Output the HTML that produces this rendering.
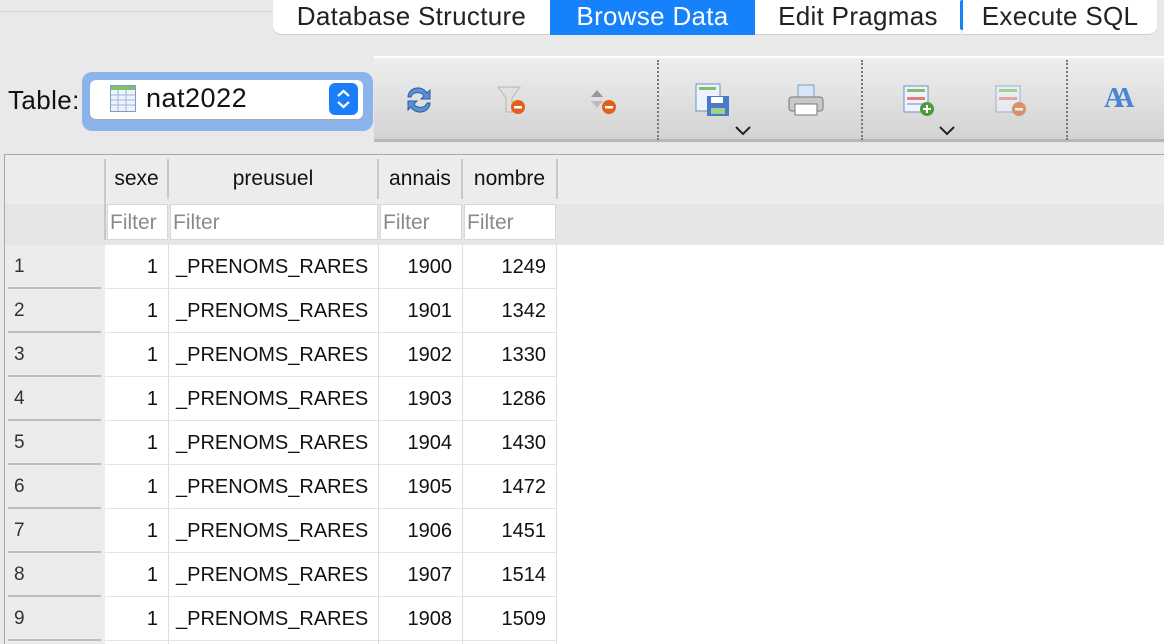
<!DOCTYPE html>
<html><head><meta charset="utf-8"><style>
*{margin:0;padding:0;box-sizing:border-box}
body{width:1164px;height:644px;overflow:hidden;background:#e9e9e9;font-family:"Liberation Sans",sans-serif;position:relative}
.a{position:absolute}
.tab{position:absolute;top:0;height:35px;background:#fff;font-size:26px;letter-spacing:0.3px;color:#222;text-align:center;line-height:33px;border-bottom:1px solid #cfcfcf;white-space:nowrap}
.cell{position:absolute;font-size:20px;color:#111;line-height:44px;height:44px;white-space:nowrap}
.rh{position:absolute;left:8px;width:93px;height:44px;font-size:19px;color:#333;line-height:44px;padding-left:6px;border-bottom:2px solid #bdbdbd}
.vl{position:absolute;top:245px;bottom:0;width:1px;background:#dedede}
.hl{position:absolute;left:105px;width:452px;height:1px;background:#e2e2e2}
.filt{position:absolute;top:204px;height:36px;background:#fff;border:1px solid #d8d8d8;font-size:21px;color:#8a8a8a;line-height:36px;padding-left:2px;overflow:hidden}
.hd{position:absolute;top:159px;height:40px;font-size:21px;color:#111;text-align:center;line-height:40px;border-right:2px solid #c8c8c8}
.sep{position:absolute;top:60px;height:80px;border-left:2px dotted #777}
</style></head><body>
<div class="a" style="left:0;top:11px;width:273px;height:1px;background:#d6d6d6"></div>
<div class="tab" style="left:273px;width:277px;border-radius:0 0 0 9px">Database Structure</div>
<div class="tab" style="left:550px;width:205px;background:#1581fb;color:#fff;border:none">Browse Data</div>
<div class="tab" style="left:755px;width:206px">Edit Pragmas</div>
<div class="a" style="left:960px;top:0;width:4px;height:30px;background:#1581fb;border-radius:3px"></div>
<div class="tab" style="left:963px;width:194px;border-radius:0 0 9px 0">Execute SQL</div>

<div class="a" style="left:8px;top:85px;font-size:26px;letter-spacing:0.4px;color:#111">Table:</div>
<div class="a" style="left:82px;top:72px;width:291px;height:59px;background:#8cb3ea;border-radius:10px"></div>
<div class="a" style="left:90px;top:80px;width:273px;height:39px;background:#fff;border-radius:6px;box-shadow:0 1px 1px #aaa"></div>
<svg class="a" style="left:110px;top:85px" width="26" height="27" viewBox="0 0 26 27"><rect x="0.5" y="0.5" width="25" height="26" fill="#eef3fb" stroke="#7d9cc8"/><rect x="1" y="1" width="24" height="4" fill="#7fbf6e"/><g stroke="#9fb6d8"><line x1="1" y1="10" x2="25" y2="10"/><line x1="1" y1="15" x2="25" y2="15"/><line x1="1" y1="20" x2="25" y2="20"/><line x1="8" y1="5" x2="8" y2="26"/><line x1="16" y1="5" x2="16" y2="26"/></g></svg>
<div class="a" style="left:146px;top:83px;font-size:27px;letter-spacing:0.5px;color:#111">nat2022</div>
<div class="a" style="left:329px;top:83px;width:29px;height:32px;background:#1a7ef8;border-radius:6px"></div>
<svg class="a" style="left:329px;top:83px" width="29" height="32"><path d="M9 13l5.5-5 5.5 5M9 19l5.5 5 5.5-5" stroke="#fff" stroke-width="2.2" fill="none"/></svg>

<div class="a" style="left:374px;top:56px;width:790px;height:86px;background:linear-gradient(#eeeeee,#d3d3d3);border-top:2px solid #fff;border-bottom:3px solid #b8b8b8"></div>
<div class="sep" style="left:657px"></div><div class="sep" style="left:861px"></div><div class="sep" style="left:1066px"></div>
<svg class="a" style="left:404px;top:84px" width="30" height="32"><path d="M4 13a10 9 0 0 1 19-4l3-3v9h-9l3-3a7 6 0 0 0-13 1z" fill="#5b8fd0" stroke="#2a5ea6"/><path d="M26 19a10 9 0 0 1-19 4l-3 3v-9h9l-3 3a7 6 0 0 0 13-1z" fill="#5b8fd0" stroke="#2a5ea6"/></svg>
<svg class="a" style="left:496px;top:85px" width="32" height="32"><path d="M2 2h22l-8 11v14h-6V13z" fill="#e0e0e0" stroke="#b5b5b5"/><circle cx="22" cy="22" r="7" fill="#e2601a"/><rect x="18" y="21" width="8" height="2.5" fill="#fff"/></svg>
<svg class="a" style="left:591px;top:88px" width="30" height="28"><path d="M6 2l6 7H0z" fill="#999"/><path d="M0 13h12l-6 7z" fill="#bbb"/><circle cx="18" cy="19" r="7" fill="#e2601a"/><rect x="14" y="18" width="8" height="2.5" fill="#fff"/></svg>
<svg class="a" style="left:695px;top:83px" width="36" height="34"><rect x="1" y="1" width="24" height="27" fill="#eef3fb" stroke="#6c8fc4"/><rect x="4" y="4" width="17" height="3" fill="#7fbf6e"/><rect x="12" y="13" width="22" height="20" fill="#4a7bc8"/><rect x="16" y="14" width="12" height="6" fill="#fff"/><rect x="16" y="25" width="14" height="6" fill="#9fd08a"/></svg>
<svg class="a" style="left:733px;top:125px" width="20" height="12"><path d="M3 2l7 7 7-7" stroke="#222" stroke-width="2" fill="none"/></svg>
<svg class="a" style="left:788px;top:84px" width="36" height="32"><rect x="10" y="1" width="16" height="14" fill="#d6e6f8" stroke="#7a9bc8"/><rect x="1" y="13" width="34" height="14" rx="3" fill="#c8c8c8" stroke="#777"/><rect x="7" y="20" width="22" height="11" fill="#fff" stroke="#777"/></svg>
<svg class="a" style="left:903px;top:85px" width="34" height="32"><rect x="1" y="1" width="24" height="26" fill="#eef3fb" stroke="#6c8fc4"/><rect x="4" y="4" width="18" height="3" fill="#7fbf6e"/><rect x="4" y="12" width="18" height="3" fill="#e87a7a"/><rect x="4" y="18" width="18" height="2" fill="#aac0e0"/><circle cx="24" cy="24" r="7" fill="#4d9a3a"/><path d="M24 20v8M20 24h8" stroke="#fff" stroke-width="2"/></svg>
<svg class="a" style="left:937px;top:125px" width="20" height="12"><path d="M3 2l7 7 7-7" stroke="#222" stroke-width="2" fill="none"/></svg>
<svg class="a" style="left:995px;top:85px" width="34" height="32" opacity="0.6"><rect x="1" y="1" width="24" height="26" fill="#eef3fb" stroke="#6c8fc4"/><rect x="4" y="4" width="18" height="3" fill="#7fbf6e"/><rect x="4" y="12" width="18" height="3" fill="#e87a7a"/><circle cx="24" cy="24" r="7" fill="#d2601a"/><rect x="20" y="23" width="8" height="2.5" fill="#fff"/></svg>
<div class="a" style="left:1104px;top:83px;font-size:28px;font-weight:bold;color:#4c84d4;font-family:'Liberation Serif',serif;letter-spacing:-10px">AA</div>

<div class="a" style="left:4px;top:154px;width:1160px;height:490px;border-top:1px solid #a8a8a8;border-left:1px solid #a8a8a8;background:#fff"></div>
<div class="a" style="left:5px;top:155px;width:1159px;height:49px;background:#ececec"></div>
<div class="a" style="left:5px;top:204px;width:1159px;height:41px;background:#e6e6e6"></div>
<div class="a" style="left:5px;top:245px;width:100px;height:399px;background:#ececec"></div>
<div class="a" style="left:104px;top:159px;width:2px;height:81px;background:#c8c8c8"></div>
<div class="hd" style="left:106px;width:63px">sexe</div>
<div class="hd" style="left:169px;width:210px">preusuel</div>
<div class="hd" style="left:379px;width:84px">annais</div>
<div class="hd" style="left:463px;width:95px">nombre</div>
<div class="filt" style="left:107px;width:61px">Filter</div>
<div class="filt" style="left:170px;width:208px">Filter</div>
<div class="filt" style="left:380px;width:82px">Filter</div>
<div class="filt" style="left:464px;width:92px">Filter</div>
<div class="vl" style="left:168px"></div><div class="vl" style="left:378px"></div><div class="vl" style="left:462px"></div><div class="vl" style="left:556px"></div>
<div class="hl" style="top:288px"></div><div class="hl" style="top:332px"></div><div class="hl" style="top:376px"></div><div class="hl" style="top:420px"></div><div class="hl" style="top:464px"></div><div class="hl" style="top:508px"></div><div class="hl" style="top:552px"></div><div class="hl" style="top:596px"></div><div class="hl" style="top:640px"></div>
<div id="rows"></div>
<script>
var n=[1249,1342,1330,1286,1430,1472,1451,1514,1509],h='';
for(var i=0;i<9;i++){var t=245+i*44;
h+='<div class="rh" style="top:'+t+'px">'+(i+1)+'</div>';
h+='<div class="cell" style="left:106px;width:52px;text-align:right;top:'+t+'px">1</div>';
h+='<div class="cell" style="left:176px;top:'+t+'px">_PRENOMS_RARES</div>';
h+='<div class="cell" style="left:380px;width:72px;text-align:right;top:'+t+'px">'+(1900+i)+'</div>';
h+='<div class="cell" style="left:464px;width:82px;text-align:right;top:'+t+'px">'+n[i]+'</div>';}
document.getElementById('rows').innerHTML=h;
</script>
</body></html>
